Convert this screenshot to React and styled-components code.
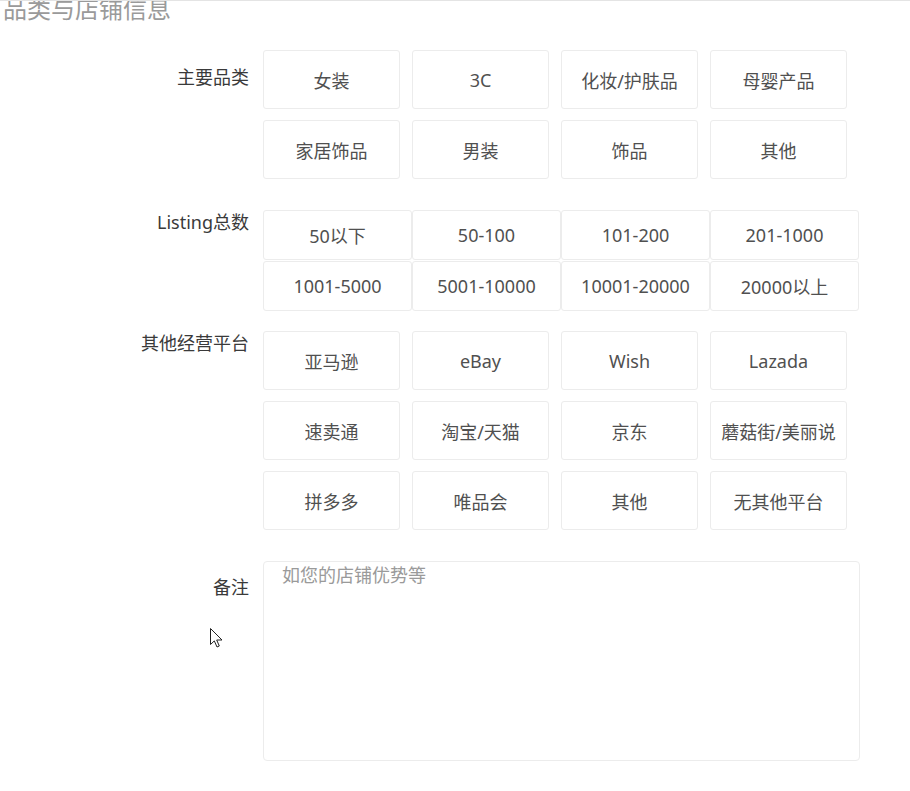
import styled, { createGlobalStyle } from "styled-components";

const GlobalStyle = createGlobalStyle`
  html, body {
    margin: 0;
    padding: 0;
    background: #fff;
  }
  body {
    font-family: "Microsoft YaHei", "Noto Sans", "Noto Sans CJK SC", sans-serif;
  }
`;

const categories = ["女装", "3C", "化妆/护肤品", "母婴产品", "家居饰品", "男装", "饰品", "其他"];
const listings = ["50以下", "50-100", "101-200", "201-1000", "1001-5000", "5001-10000", "10001-20000", "20000以上"];
const platforms = [
  "亚马逊", "eBay", "Wish", "Lazada",
  "速卖通", "淘宝/天猫", "京东", "蘑菇街/美丽说",
  "拼多多", "唯品会", "其他", "无其他平台",
];

export default function App() {
  return (
    <>
      <GlobalStyle />
      <Page>
        <Title>品类与店铺信息</Title>

        <Section $mb={31}>
          <Label $offset={15}>主要品类</Label>
          <OptionGrid $col={137} $colGap={12} $rowGap={11}>
            {categories.map((c) => (
              <Option key={c} $height={59}>{c}</Option>
            ))}
          </OptionGrid>
        </Section>

        <Section $mb={20}>
          <Label $offset={0}>Listing总数</Label>
          <OptionGrid $col={149} $colGap={0} $rowGap={1}>
            {listings.map((c) => (
              <Option key={c} $height={50}>{c}</Option>
            ))}
          </OptionGrid>
        </Section>

        <Section $mb={31}>
          <Label $offset={0}>其他经营平台</Label>
          <OptionGrid $col={137} $colGap={12} $rowGap={11}>
            {platforms.map((c) => (
              <Option key={c} $height={59}>{c}</Option>
            ))}
          </OptionGrid>
        </Section>

        <Section $mb={30}>
          <Label $offset={14}>备注</Label>
          <Remark placeholder="如您的店铺优势等" />
        </Section>

        <Cursor viewBox="0 0 13 20" width="13" height="20">
          <path
            d="M0.5 0.5 L0.5 16.5 L4.3 12.9 L7 19 L9.3 18 L6.7 12 L12 12 Z"
            fill="#fff"
            stroke="#222"
            strokeWidth="1"
            strokeLinejoin="round"
          />
        </Cursor>
      </Page>
    </>
  );
}

const Page = styled.div`
  position: relative;
  width: 910px;
  min-height: 791px;
  border-top: 1px solid #e4e4e4;
  box-sizing: border-box;
  overflow: hidden;
`;

const Title = styled.h2`
  margin: -7px 0 0 3px;
  font-size: 24px;
  line-height: 28px;
  font-weight: normal;
  color: #9a9a9a;
  height: 56px;
  font-family: "Microsoft YaHei", "Noto Sans CJK SC", sans-serif;
`;

const Section = styled.div`
  display: grid;
  grid-template-columns: 249px auto;
  column-gap: 14px;
  align-items: start;
  margin-bottom: ${(p) => p.$mb}px;
`;

const Label = styled.div`
  text-align: right;
  font-size: 18px;
  line-height: 24px;
  color: #3a3a3a;
  padding-top: ${(p) => p.$offset}px;
  white-space: nowrap;
`;

const OptionGrid = styled.div`
  display: grid;
  grid-template-columns: repeat(4, ${(p) => p.$col}px);
  column-gap: ${(p) => p.$colGap}px;
  row-gap: ${(p) => p.$rowGap}px;
`;

const Option = styled.div`
  height: ${(p) => p.$height}px;
  box-sizing: border-box;
  border: 1px solid #ececec;
  border-radius: 3px;
  display: flex;
  align-items: center;
  justify-content: center;
  font-size: 18px;
  color: #505050;
  background: #fff;
  cursor: pointer;
  white-space: nowrap;
`;

const Remark = styled.textarea`
  width: 597px;
  height: 200px;
  box-sizing: border-box;
  border: 1px solid #ececec;
  border-radius: 4px;
  padding: 0 18px;
  font-size: 18px;
  line-height: 26px;
  font-family: inherit;
  color: #555;
  resize: none;
  outline: none;

  &::placeholder {
    color: #9a9a9a;
  }
`;

const Cursor = styled.svg`
  position: absolute;
  left: 210px;
  top: 627px;
`;
